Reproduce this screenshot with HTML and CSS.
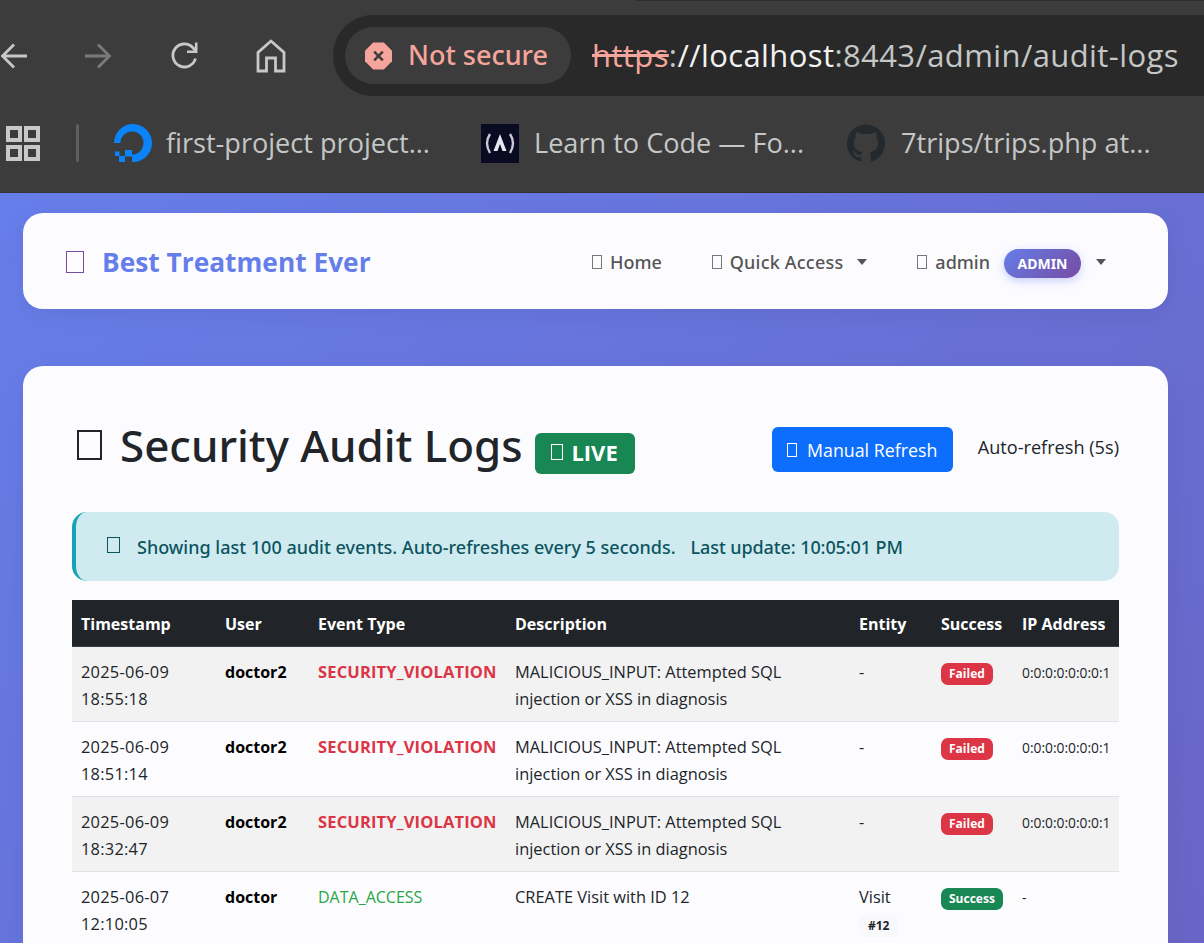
FILE: index.html
```html
<!DOCTYPE html>
<html>
<head>
<meta charset="utf-8">
<title>Security Audit Logs</title>
<link rel="stylesheet" href="styles.css">
</head>
<body>

<div class="chrome">
  <div class="edge"></div>
  <div class="toolbar">
    <svg class="ic ic-back" viewBox="0 0 28 28"><path d="M27 14H3M14 2.500 2.500 14 14 25.500" fill="none" stroke="#c8c8c8" stroke-width="2.800"/></svg>
    <svg class="ic ic-fwd" viewBox="0 0 28 28"><path d="M1 14h24M14 2.500 25.500 14 14 25.500" fill="none" stroke="#7a7a7a" stroke-width="2.800"/></svg>
    <svg class="ic ic-reload" viewBox="0 0 30 30"><path d="M25.500 17.500A11.500 11.500 0 1 1 22.500 6.300L26 10" fill="none" stroke="#c8c8c8" stroke-width="2.800"/><path d="M27.500 1.500V12H17v-2.600h7.900V1.500z" fill="#c8c8c8"/></svg>
    <svg class="ic ic-home" viewBox="0 0 30 34"><path d="M2 32V13.500L15 2l13 11.500V32h-8.500V19h-9v13z" fill="none" stroke="#c8c8c8" stroke-width="2.800"/></svg>
    <div class="omnibox">
      <div class="chip">
        <svg class="ic-warn" viewBox="0 0 28 28"><path d="M8.500 0h11L28 8.500v11L19.500 28h-11L0 19.500v-11z" fill="#f6a59c"/><path d="M9.500 9.500l9 9M18.500 9.500l-9 9" stroke="#3c3c3c" stroke-width="2.600"/></svg>
        <span class="chip-text">Not secure</span>
      </div>
      <div class="url"><span class="scheme">https</span><span class="dim">:</span>//localhost<span class="dim">:8443/admin/audit-logs</span></div>
    </div>
  </div>
  <div class="bookmarks">
    <svg class="ic-apps" viewBox="0 0 34 35"><path d="M2 2h12v12H2zM20 2h12v12H20zM2 21h12v12H2zM20 21h12v12H20z" fill="none" stroke="#c8c8c8" stroke-width="4"/></svg>
    <span class="sep"></span>
    <div class="bm bm-do">
      <svg class="fav" viewBox="0 0 38 39"><path d="M18 38v-7.500a11.500 11.500 0 1 0-11.500-11.500H0A19 19 0 1 1 18 38z" fill="#0a84f8"/><path d="M11 26h7v6.500h-7zM5 32h6v6H5zM1 27.500h4.500V32H1z" fill="#0a84f8"/></svg>
      <span>first-project project...</span>
    </div>
    <div class="bm bm-fcc">
      <svg class="fav" viewBox="0 0 38 39"><rect width="38" height="39" fill="#0a0a23"/><path d="M9 10Q3 19 9 29M29 10q6 9 0 19" fill="none" stroke="#c9c9d1" stroke-width="2.400"/><path d="M19 10l6.500 17h-4L19 20l-2.500 7h-4z" fill="#e8e8ee"/></svg>
      <span>Learn to Code — Fo...</span>
    </div>
    <div class="bm bm-gh">
      <svg class="fav" viewBox="0 0 16 16"><path fill="#24292e" d="M8 0C3.580 0 0 3.580 0 8c0 3.540 2.290 6.530 5.470 7.590.4.070.55-.17.550-.38 0-.19-.010-.82-.010-1.490-2.010.370-2.530-.490-2.690-.940-.090-.230-.480-.940-.820-1.130-.280-.150-.680-.520-.010-.530.630-.010 1.080.580 1.230.820.720 1.210 1.870.870 2.330.660.070-.520.280-.870.510-1.070-1.780-.2-3.640-.890-3.640-3.950 0-.870.310-1.590.820-2.150-.080-.2-.360-1.020.080-2.120 0 0 .670-.210 2.200.820.640-.180 1.320-.270 2-.270s1.360.090 2 .270c1.530-1.040 2.200-.820 2.200-.820.440 1.100.160 1.920.080 2.120.510.560.820 1.270.820 2.150 0 3.070-1.870 3.750-3.650 3.950.290.250.540.730.540 1.480 0 1.070-.010 1.930-.010 2.200 0 .210.150.460.550.380A8.010 8.010 0 0 0 16 8c0-4.420-3.580-8-8-8z"/></svg>
      <span>7trips/trips.php at...</span>
    </div>
  </div>
</div>

<div class="page">

  <nav class="navbar">
    <a class="brand"><span class="tofu tofu-brand"></span>Best Treatment Ever</a>
    <div class="nav-links">
      <a class="nav-link nl-home"><span class="tofu tofu-nav"></span>Home</a>
      <a class="nav-link nl-quick"><span class="tofu tofu-nav"></span>Quick Access<span class="caret"></span></a>
      <a class="nav-link nl-user"><span class="tofu tofu-nav"></span>admin<span class="role">ADMIN</span><span class="caret"></span></a>
    </div>
  </nav>

  <div class="card">
    <div class="head">
      <h1><span class="tofu tofu-h1"></span>Security Audit Logs<span class="live"><span class="tofu tofu-live"></span>LIVE</span></h1>
      <div class="head-right">
        <button class="btn-refresh"><span class="tofu tofu-btn"></span>Manual Refresh</button>
        <span class="auto">Auto-refresh (5s)</span>
      </div>
    </div>

    <div class="alert"><span class="tofu tofu-alert"></span><span>Showing last 100 audit events. Auto-refreshes every 5 seconds.</span><span class="updated">Last update: 10:05:01 PM</span></div>

    <table class="logs">
      <colgroup>
        <col class="c-time"><col class="c-user"><col class="c-type"><col class="c-desc"><col class="c-ent"><col class="c-ok"><col class="c-ip">
      </colgroup>
      <thead>
        <tr><th>Timestamp</th><th>User</th><th>Event Type</th><th>Description</th><th>Entity</th><th>Success</th><th>IP Address</th></tr>
      </thead>
      <tbody>
        <tr>
          <td class="ts">2025-06-09 18:55:18</td><td class="who">doctor2</td><td class="ev-bad">SECURITY_VIOLATION</td>
          <td>MALICIOUS_INPUT: Attempted SQL injection or XSS in diagnosis</td><td>-</td>
          <td><span class="badge failed">Failed</span></td><td class="ip">0:0:0:0:0:0:0:1</td>
        </tr>
        <tr>
          <td class="ts">2025-06-09 18:51:14</td><td class="who">doctor2</td><td class="ev-bad">SECURITY_VIOLATION</td>
          <td>MALICIOUS_INPUT: Attempted SQL injection or XSS in diagnosis</td><td>-</td>
          <td><span class="badge failed">Failed</span></td><td class="ip">0:0:0:0:0:0:0:1</td>
        </tr>
        <tr>
          <td class="ts">2025-06-09 18:32:47</td><td class="who">doctor2</td><td class="ev-bad">SECURITY_VIOLATION</td>
          <td>MALICIOUS_INPUT: Attempted SQL injection or XSS in diagnosis</td><td>-</td>
          <td><span class="badge failed">Failed</span></td><td class="ip">0:0:0:0:0:0:0:1</td>
        </tr>
        <tr>
          <td class="ts">2025-06-07 12:10:05</td><td class="who">doctor</td><td class="ev-ok">DATA_ACCESS</td>
          <td>CREATE Visit with ID 12</td><td>Visit <span class="badge ref">#12</span></td>
          <td><span class="badge ok">Success</span></td><td class="ip">-</td>
        </tr>
      </tbody>
    </table>
  </div>
</div>

</body>
</html>
```

FILE: styles.css
```css
html, body { margin: 0; height: 943px; overflow: hidden; }
body { font-family: "Open Sans", "Noto Sans", sans-serif; color: #212529; background: #6a66c8; }

/* browser chrome */
.chrome { height: 193px; background: #3c3c3c; border-bottom: 1px solid #333; box-sizing: border-box; }
.edge { height: 1px; margin-left: 636px; background: #2e2e2e; }
.toolbar { height: 109px; display: flex; align-items: center; }
.ic { flex: none; }
.ic-back { width: 28px; height: 28px; margin-right: 56px; }
.ic-fwd { width: 28px; height: 28px; margin-right: 58px; }
.ic-reload { width: 30px; height: 30px; margin-right: 56px; }
.ic-home { width: 30px; height: 34px; margin-right: 47px; }
.omnibox { flex: 1; height: 81px; background: #292929; border-radius: 40px 0 0 40px; display: flex; align-items: center; padding-left: 12px; }
.chip { width: 226px; height: 57px; box-sizing: border-box; padding-left: 20px; background: #3c3c3c; border-radius: 29px; display: flex; align-items: center; gap: 16px; color: #f6a59c; font-family: "Noto Sans", sans-serif; font-weight: 500; font-size: 27px; }
.chip-text { padding-bottom: 2px; }
.ic-warn { width: 27px; height: 28px; flex: none; }
.url { margin-left: 21px; padding-bottom: 2px; font-size: 31px; letter-spacing: .4px; color: #f2f2f2; white-space: nowrap; }
.url .scheme { color: #f6a59c; text-decoration: line-through; }
.url .dim { color: #c4c7c5; }

.bookmarks { height: 82px; display: flex; align-items: center; padding-left: 6px; padding-bottom: 16px; box-sizing: border-box; color: #c4c7c5; font-size: 27.100px; white-space: nowrap; }
.bm span { padding-bottom: 2px; }
.ic-apps { width: 34px; height: 35px; flex: none; }
.sep { width: 3px; height: 38px; background: #5f5f5f; border-radius: 2px; margin: 0 35px 0 36px; }
.bm { display: flex; align-items: center; }
.fav { width: 38px; height: 39px; flex: none; }
.bm-do { width: 367px; gap: 14px; }
.bm-fcc { width: 366px; gap: 15px; }
.bm-gh { gap: 16px; }

/* page */
.page { padding: 20px 36px 0 23px; background: linear-gradient(135deg, #667eea 0%, #6965c6 100%); height: 750px; box-sizing: border-box; }
.navbar { height: 96px; box-sizing: border-box; padding: 2px 62px 0 43px; background: #fcfcff; border-radius: 20px; display: flex; align-items: center; justify-content: space-between; box-shadow: 0 6px 24px rgba(0,0,0,.06); }
.brand { display: flex; align-items: center; font-size: 26.300px; font-weight: 700; color: #667eea; }
.nav-links { display: flex; align-items: center; }
.nav-link { display: flex; align-items: center; font-size: 18px; font-weight: 500; font-family: "Noto Sans", sans-serif; color: #555; }
.nl-home { margin-right: 50px; }
.nl-quick { margin-right: 50px; letter-spacing: .2px; }
.caret { width: 0; height: 0; border-left: 5px solid transparent; border-right: 5px solid transparent; border-top: 6px solid #555; margin-left: 14px; }
.nl-user .caret { margin-left: 15px; }
.role { margin-left: 14px; margin-top: 2px; width: 77px; height: 29px; line-height: 29px; text-align: center; border-radius: 15px; background: linear-gradient(135deg, #667eea, #764ba2); color: #fff; font-size: 14px; font-weight: 700; letter-spacing: 0; box-shadow: 0 3px 10px rgba(102,126,234,.35); }

.tofu { display: inline-block; box-sizing: border-box; border: 1px solid currentColor; flex: none; }
.tofu-brand { width: 18px; height: 22px; margin-right: 18px; border-color: #764ba2; }
.tofu-nav { width: 10px; height: 14px; margin-right: 8px; border-color: #777; }
.tofu-h1 { width: 25px; height: 30px; margin-right: 18px; border-width: 2px; }
.tofu-live { width: 12px; height: 16px; margin-right: 8px; }
.tofu-btn { width: 10px; height: 14px; margin-right: 10px; }
.tofu-alert { width: 13px; height: 16px; margin-right: 17px; position: relative; top: -2px; }

.card { margin-top: 57px; background: #fcfcff; border-radius: 20px; padding: 49px 49px 0; height: 700px; box-shadow: 0 8px 30px rgba(0,0,0,.06); }
.head { display: flex; justify-content: space-between; align-items: flex-start; height: 97px; }
h1 { margin: 0 0 0 5px; display: flex; align-items: center; font-family: "Noto Sans", sans-serif; font-size: 43.900px; font-weight: 500; line-height: 56px; }
.live { display: inline-flex; align-items: center; justify-content: center; box-sizing: border-box; width: 100px; height: 41px; padding-bottom: 3px; margin-left: 12px; align-self: flex-start; margin-top: 18px; background: #198754; color: #fff; border-radius: 6px; font-family: "Open Sans", sans-serif; font-size: 22px; font-weight: 700; }
.head-right { display: flex; align-items: center; gap: 25px; margin-top: 12px; }
.btn-refresh { width: 181px; height: 45px; border: 0; border-radius: 6px; background: #0d6efd; color: #fff; font: inherit; font-size: 17.800px; }
.auto { font-size: 18.150px; position: relative; top: -3px; }

.alert { height: 69px; box-sizing: border-box; background: #d0ebf0; border-left: 4px solid #17a2b8; border-radius: 15px; display: flex; align-items: center; padding-left: 31px; color: #0c5460; font-family: "Noto Sans", sans-serif; font-size: 18px; font-weight: 500; }
.updated { margin-left: 15px; letter-spacing: -.1px; }

.logs { margin-top: 19px; width: 1047px; table-layout: fixed; border-collapse: collapse; font-size: 16.400px; line-height: 27px; }
.c-time { width: 144px; } .c-user { width: 93px; } .c-type { width: 197px; } .c-desc { width: 344px; }
.c-ent { width: 82px; } .c-ok { width: 81px; } .c-ip { width: 106px; }
.logs th { background: #212529; color: #fff; text-align: left; padding: 11px 9px 8px; font-size: 16px; font-weight: 700; border-bottom: 1px solid #3d4045; white-space: nowrap; }
.logs td { padding: 11px 9px 9px; vertical-align: top; border-bottom: 1px solid #dee2e6; background: #fcfcff; }
.logs tbody tr:nth-child(odd) td { background: #f2f2f2; }
.ts { letter-spacing: .25px; }
.logs .who { padding-top: 12px; padding-bottom: 8px; font-size: 16px; font-weight: 700; color: #000; }
.logs .ev-bad { font-size: 16.500px; letter-spacing: .15px; font-weight: 700; color: #dc3545; white-space: nowrap; }
.logs .ev-ok { padding-top: 12px; padding-bottom: 8px; font-size: 16px; color: #28a745; }
.logs .ip { padding-top: 12px; padding-bottom: 8px; font-size: 13.800px; white-space: nowrap; }
.badge { display: inline-block; height: 22px; line-height: 22px; padding: 0 8px; border-radius: 7px; font-size: 12px; font-weight: 700; color: #fff; vertical-align: middle; }
.failed { background: #dc3545; }
.ok { background: #198754; }
.ref { background: #f8f9fa; color: #212529; padding: 0 9px; }
```
